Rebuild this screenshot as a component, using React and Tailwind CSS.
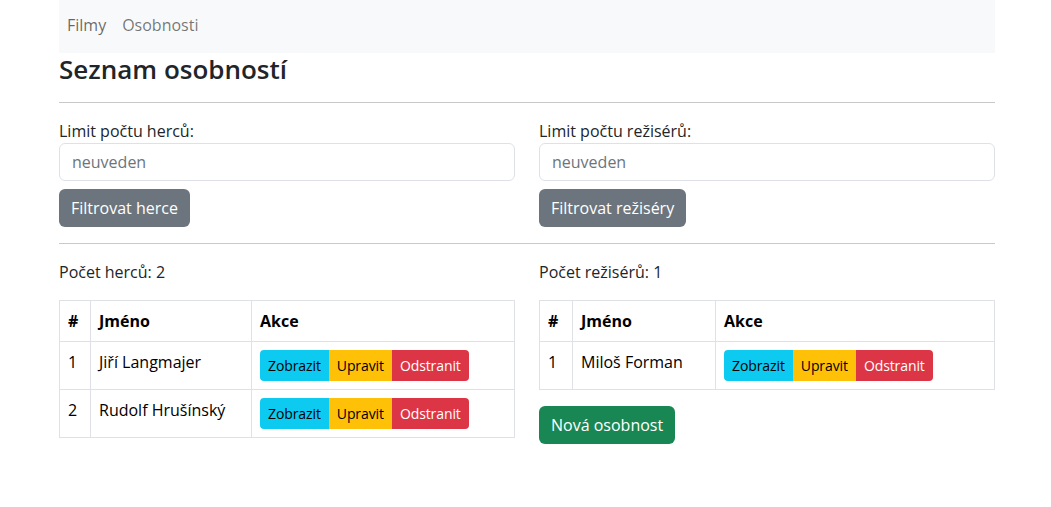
import React from "react";

const font = { fontFamily: '"Open Sans", "Noto Sans", sans-serif' };

function ActionGroup() {
  return (
    <div className="inline-flex text-[14px] leading-[21px] tracking-[-0.1px]">
      <button className="bg-[#0dcaf0] text-black px-2 py-[5px] rounded-l-[4px]">Zobrazit</button>
      <button className="bg-[#ffc107] text-black px-2 py-[5px]">Upravit</button>
      <button className="bg-[#dc3545] text-white px-2 py-[5px] rounded-r-[4px]">Odstranit</button>
    </div>
  );
}

function PeopleTable({ people, cols }) {
  return (
    <table className="w-full border-collapse text-black text-[16px] leading-6 mb-4">
      <thead>
        <tr>
          <th className={`border border-[#dee2e6] p-2 text-left font-bold ${cols[0]}`}>#</th>
          <th className={`border border-[#dee2e6] p-2 text-left font-bold ${cols[1]}`}>Jméno</th>
          <th className="border border-[#dee2e6] p-2 text-left font-bold">Akce</th>
        </tr>
      </thead>
      <tbody>
        {people.map((p, i) => (
          <tr key={p}>
            <td className="border border-[#dee2e6] p-2 align-top">{i + 1}</td>
            <td className="border border-[#dee2e6] p-2 align-top">{p}</td>
            <td className="border border-[#dee2e6] p-2 align-top">
              <ActionGroup />
            </td>
          </tr>
        ))}
      </tbody>
    </table>
  );
}

function FilterCol({ label, btn }) {
  return (
    <div className="flex-1 min-w-0">
      <div className="text-[16px] leading-6">{label}</div>
      <input
        className="block w-full h-[38px] border border-[#dee2e6] rounded-[6px] px-3 text-[16px] text-[#212529] placeholder:text-[#6c757d] bg-white outline-none"
        placeholder="neuveden"
      />
      <button className="mt-2 h-[38px] px-3 rounded-[6px] bg-[#6c757d] text-white text-[16px] leading-6">
        {btn}
      </button>
    </div>
  );
}

export default function App() {
  return (
    <div className="min-h-[507px] bg-white text-[#212529]" style={font}>
      <div className="w-[936px] ml-[59px]">
        <nav className="h-[53px] bg-[#f8f9fa] flex items-start pt-[13px] text-[16px] leading-6">
          <a className="px-2 text-[rgba(0,0,0,0.6)]">Filmy</a>
          <a className="px-2 text-[rgba(0,0,0,0.55)]">Osobnosti</a>
        </nav>
        <h1 className="text-[26px] leading-[33px] font-semibold">Seznam osobností</h1>
        <hr className="mt-[16px] mb-[16px] border-t border-[#c8c9ca]" />
        <div className="flex gap-6">
          <FilterCol label="Limit počtu herců:" btn="Filtrovat herce" />
          <FilterCol label="Limit počtu režisérů:" btn="Filtrovat režiséry" />
        </div>
        <hr className="mt-[16px] mb-[16px] border-t border-[#c8c9ca]" />
        <div className="flex gap-6">
          <div className="flex-1 min-w-0">
            <p className="text-[16px] leading-6 mb-4">Počet herců: 2</p>
            <PeopleTable people={["Jiří Langmajer", "Rudolf Hrušínský"]} cols={["w-[31px]", "w-[161px]"]} />
          </div>
          <div className="flex-1 min-w-0">
            <p className="text-[16px] leading-6 mb-4">Počet režisérů: 1</p>
            <PeopleTable people={["Miloš Forman"]} cols={["w-[33px]", "w-[143px]"]} />
            <button className="h-[38px] px-3 rounded-[6px] bg-[#198754] text-white text-[16px] leading-6">
              Nová osobnost
            </button>
          </div>
        </div>
      </div>
    </div>
  );
}
